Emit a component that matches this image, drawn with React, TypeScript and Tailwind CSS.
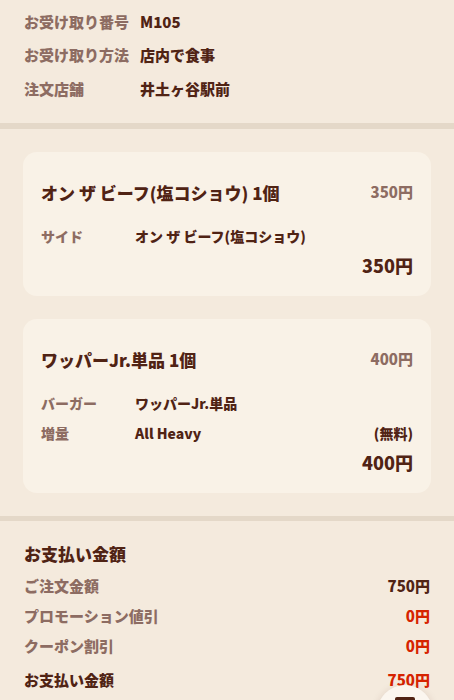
import React from 'react';

const font = { fontFamily: '"Noto Sans CJK JP", "Noto Sans", sans-serif' };

type Option = { label: string; value: string; extra?: string };
type Item = { title: string; price: string; options: Option[]; total: string };

const items: Item[] = [
  {
    title: 'オン ザ ビーフ(塩コショウ) 1個',
    price: '350円',
    options: [{ label: 'サイド', value: 'オン ザ ビーフ(塩コショウ)' }],
    total: '350円',
  },
  {
    title: 'ワッパーJr.単品 1個',
    price: '400円',
    options: [
      { label: 'バーガー', value: 'ワッパーJr.単品' },
      { label: '増量', value: 'All Heavy', extra: '(無料)' },
    ],
    total: '400円',
  },
];

const info = [
  { label: 'お受け取り番号', value: 'M105' },
  { label: 'お受け取り方法', value: '店内で食事' },
  { label: '注文店舗', value: '井土ヶ谷駅前' },
];

const payment = [
  { label: 'ご注文金額', value: '750円', red: false, strong: false },
  { label: 'プロモーション値引', value: '0円', red: true, strong: false },
  { label: 'クーポン割引', value: '0円', red: true, strong: false },
  { label: 'お支払い金額', value: '750円', red: true, strong: true },
];

function ItemCard({ item }: { item: Item }) {
  return (
    <div className="rounded-[14px] bg-[#f9f2e7] px-[18px] pt-[28px] pb-[17px]">
      {/* 商品名と単価 */}
      <div className="flex items-center justify-between h-[26px]">
        <span className="text-[17px] font-extrabold text-[#502314]">{item.title}</span>
        <span className="text-[15px] font-extrabold text-[#8d6c62]">{item.price}</span>
      </div>
      <div className="mt-[21px] flex flex-col gap-[10px]">
        {item.options.map((opt, i) => (
          <div key={i} className="flex items-center h-[20px]">
            <span className="w-[94px] text-[14px] font-extrabold text-[#8d6c62]">{opt.label}</span>
            <span className="flex-1 text-[14px] font-extrabold text-[#502314]">{opt.value}</span>
            {opt.extra && <span className="text-[14px] font-extrabold text-[#502314]">{opt.extra}</span>}
          </div>
        ))}
      </div>
      <div className="mt-[6px] flex justify-end h-[26px] items-center">
        <span className="text-[18px] font-extrabold text-[#502314]">{item.total}</span>
      </div>
    </div>
  );
}

export default function App() {
  return (
    <div className="h-[700px] bg-[#f4eadd] relative overflow-hidden" style={font}>
      {/* 受け取り情報 */}
      <div className="px-6 pt-[5px] pb-[17px]">
        {info.map((row, i) => (
          <div key={i} className="flex items-center h-[33.5px]">
            <span className="w-[116px] text-[15px] font-extrabold text-[#8d6c62]">{row.label}</span>
            <span className="text-[15px] font-extrabold text-[#502314]">{row.value}</span>
          </div>
        ))}
      </div>

      <div className="h-[6px] bg-[#e4d8c8]" />

      {/* 注文商品 */}
      <div className="px-[23px] py-[23px] flex flex-col gap-[23px]">
        {items.map((item, i) => (
          <ItemCard key={i} item={item} />
        ))}
      </div>

      <div className="h-[5px] bg-[#e4d8c8]" />

      {/* お支払い金額 */}
      <div className="px-6 pt-[21px]">
        <div className="h-[24px] flex items-center text-[17px] font-extrabold text-[#502314]">お支払い金額</div>
        <div className="mt-[6px] flex flex-col">
          {payment.map((row, i) => (
            <div key={i} className={`flex items-center justify-between ${row.strong ? 'h-[34px] pt-[3px]' : 'h-[30px]'}`}>
              <span className={`text-[15px] font-extrabold ${row.strong ? 'text-[#502314]' : 'text-[#8d6c62]'}`}>{row.label}</span>
              <span className={`text-[15px] font-extrabold ${row.red ? 'text-[#d62300]' : 'text-[#502314]'}`}>{row.value}</span>
            </div>
          ))}
        </div>
      </div>

      {/* フローティングボタン */}
      <div className="absolute right-[21px] bottom-[-41px] w-[56px] h-[56px] rounded-full bg-[#fbf6ef] shadow-[0_2px_8px_rgba(80,35,20,0.15)] flex justify-center">
        <div className="mt-[12px] w-[20px] h-[6px] rounded-t-[2px] bg-[#502314]" />
      </div>
    </div>
  );
}
